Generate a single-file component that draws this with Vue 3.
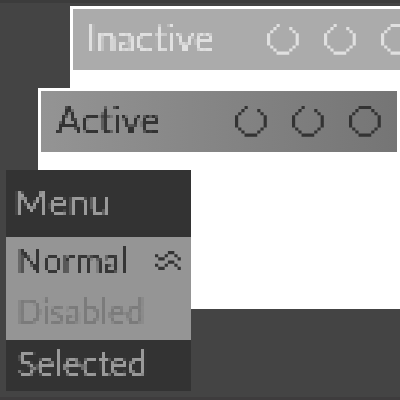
<template>
  <main class="desktop">
    <svg class="defs" width="0" height="0">
      <!-- samples one pixel in every 3x3 cell and spreads it over the cell -->
      <filter id="mosaic" filterUnits="userSpaceOnUse" x="0" y="0" width="180" height="66" color-interpolation-filters="sRGB">
        <feGaussianBlur in="SourceGraphic" stdDeviation="0.75" result="soft" />
        <feFlood x="1" y="1" width="1" height="1" flood-color="#000" />
        <feComposite in2="SourceGraphic" operator="over" x="0" y="0" width="3" height="3" />
        <feTile result="grid" />
        <feComposite in="soft" in2="grid" operator="in" />
        <feMorphology operator="dilate" radius="1" />
      </filter>
    </svg>

    <section v-for="win in windows" :key="win.title" class="window" :class="win.state">
      <header class="title-bar">
        <svg class="title" width="150" height="60">
          <g filter="url(#mosaic)">
            <text x="0" y="43" :textLength="win.width" lengthAdjust="spacingAndGlyphs">{{ win.title }}</text>
          </g>
        </svg>
        <div class="controls">
          <svg
            v-for="(shape, index) in controls"
            :key="index"
            class="control"
            viewBox="0 0 10 10"
            preserveAspectRatio="none"
          >
            <path :d="shape" />
          </svg>
        </div>
      </header>
    </section>

    <nav class="menu">
      <div class="menu-header">
        <svg class="label" width="110" height="66">
          <g filter="url(#mosaic)">
            <text x="7.5" y="45" textLength="97" lengthAdjust="spacingAndGlyphs">Menu</text>
          </g>
        </svg>
      </div>
      <div v-for="item in items" :key="item.label" class="menu-item" :class="item.state">
        <svg class="label" width="145" height="51">
          <g filter="url(#mosaic)">
            <text :x="item.x" y="36" :textLength="item.width" lengthAdjust="spacingAndGlyphs">{{ item.label }}</text>
          </g>
        </svg>
        <svg v-if="item.submenu" class="submenu" viewBox="0 0 8 6" preserveAspectRatio="none">
          <path :d="wave" />
        </svg>
      </div>
    </nav>
  </main>
</template>

<script setup>
const windows = [
  { title: 'Inactive', state: 'inactive', width: 128 },
  { title: 'Active', state: 'active', width: 104 },
]

const items = [
  { label: 'Normal', state: 'normal', x: 10.5, width: 112, submenu: true },
  { label: 'Disabled', state: 'disabled', x: 10.5, width: 128 },
  { label: 'Selected', state: 'selected', x: 11.5, width: 130 },
]

// each glyph is a set of cells on a coarse pixel grid
const sides = 'M7 1h1v1h-1z M2 1h1v1h-1z M1 2h1v1h-1z M8 2h1v1h-1z M0 3h1v4h-1z M9 3h1v4h-1z M1 7h1v1h-1z M8 7h1v1h-1z M2 8h1v1h-1z M7 8h1v1h-1z M3 9h4v1h-4z'
const openRing = `M3 0h1v1h-1z ${sides}`
const closedRing = `M3 0h4v1h-4z ${sides}`
const controls = [openRing, openRing, closedRing]
const wave = 'M4 0h2v1h-2z M0 1h1v1h-1z M3 1h1v1h-1z M6 1h1v1h-1z M1 2h2v1h-2z M7 2h1v1h-1z M4 3h2v1h-2z M0 4h1v1h-1z M3 4h1v1h-1z M6 4h1v1h-1z M1 5h2v1h-2z M7 5h1v1h-1z'
</script>

<style>
body {
  margin: 0;
  overflow: hidden;
}
</style>

<style scoped>
.desktop {
  position: relative;
  box-sizing: border-box;
  width: 400px;
  height: 400px;
  overflow: hidden;
  background: #444;
  border-top: 3px solid #3c3c3c;
  border-bottom: 3px solid #3e3c3d;
  font-family: Lato, "Liberation Sans", sans-serif;
  font-variant-ligatures: none;
}

svg {
  display: block;
  flex: none;
}

.defs {
  position: absolute;
}

text {
  fill: currentColor;
  stroke: currentColor;
  stroke-width: 0.15px;
}

.window {
  position: absolute;
  box-sizing: border-box;
  padding: 3px;
  background: #fff;
}

.window.inactive {
  left: 70px;
  top: 3px;
  width: 361px;
  height: 303px;
}

.window.active {
  left: 38px;
  top: 85px;
  width: 362px;
  height: 221px;
}

.title-bar {
  display: flex;
  align-items: center;
  box-sizing: border-box;
  width: 355.5px;
  height: 60.5px;
  padding: 0 15.5px 0 13px;
  justify-content: space-between;
}

.inactive .title-bar {
  color: #e0e0e0;
  background: #ababab;
}

.active .title-bar {
  color: #333;
  background: linear-gradient(90deg, #949494, #757575);
}

.title {
  font-size: 38px;
}

.active .title {
  margin-left: 2px;
}

.controls {
  display: flex;
  gap: 25.3px;
}

.control {
  width: 31.8px;
  height: 30.7px;
  fill: currentColor;
}

.menu {
  position: absolute;
  left: 6px;
  top: 167px;
  width: 184.5px;
  font-size: 34px;
}

.menu-header {
  height: 66.5px;
  color: #9a9a9a;
  background: #333;
}

.menu-item {
  display: flex;
  align-items: flex-start;
  justify-content: space-between;
  height: 51.5px;
  color: #363636;
  background: #959595;
}

.menu-item.disabled {
  color: #7b7b7b;
}

.menu-item.selected {
  color: #9a9a9a;
  background: #333;
}

.submenu {
  width: 25.8px;
  height: 19px;
  margin: 14.5px 9.3px 0 0;
  fill: #333;
}
</style>
